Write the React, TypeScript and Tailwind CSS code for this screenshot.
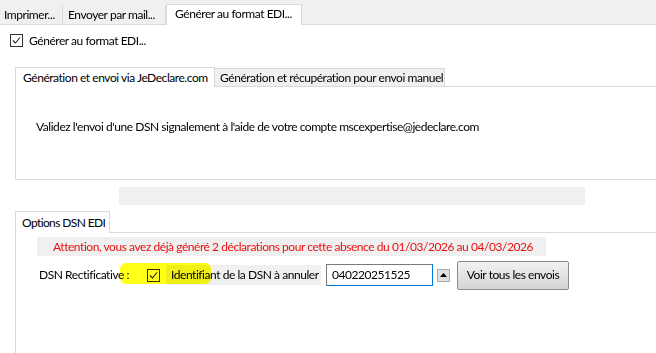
import React from 'react';

const CheckBox: React.FC<{ className?: string }> = ({ className = '' }) => (
  <span className={`inline-flex shrink-0 items-center justify-center w-[13px] h-[13px] border border-[#333333] ${className}`}>
    <svg width="11" height="11" viewBox="0 0 11 11">
      <path d="M2 5.5 L4.5 8 L9 2.5" fill="none" stroke="#222222" strokeWidth="1.1" />
    </svg>
  </span>
);

const App: React.FC = () => {
  return (
    <div className="relative w-[656px] h-[353px] overflow-hidden bg-white text-[12px] text-[#000000] font-['Lato',sans-serif] tracking-[-0.45px] leading-none whitespace-nowrap">
      {/* main tab strip */}
      <div className="flex items-end h-[25px] bg-[#f0f0f0] border-b border-[#d9d9d9]">
        <div className="flex items-center w-[63px] h-[19px] pl-[4px] border-r border-[#d9d9d9] bg-[#f0f0f0]">Imprimer...</div>
        <div className="flex items-center w-[103px] h-[19px] pl-[5px] border-r border-[#d9d9d9] bg-[#f0f0f0]">Envoyer par mail...</div>
        <div className="flex items-center w-[136px] h-[21px] pl-[8px] -mb-px bg-white border border-b-0 border-[#d9d9d9] pb-[2px]">Générer au format EDI...</div>
      </div>

      <div className="flex items-center gap-[6px] mt-[9px] ml-[10px]">
        <CheckBox />
        <span>Générer au format EDI...</span>
      </div>

      {/* JeDeclare tabs */}
      <div className="ml-[15px] mt-[19px]">
        <div className="flex items-end h-[20px]">
          <div className="flex items-center w-[200px] h-[20px] pl-[7px] bg-white border border-b-0 border-[#d9d9d9] -mb-px relative z-10">Génération et envoi via JeDeclare.com</div>
          <div className="flex items-center w-[230px] h-[18px] pl-[5px] bg-[#f0f0f0] border border-l-0 border-b-0 border-[#d9d9d9]">Génération et récupération pour envoi manuel</div>
        </div>
        <div className="w-[660px] h-[94px] border border-[#d9d9d9] flex items-center pl-[20px] pb-[13px]">
          Validez l'envoi d'une DSN signalement à l'aide de votre compte mscexpertise@jedeclare.com
        </div>
      </div>

      <div className="ml-[119px] mt-[7px] w-[466px] h-[18px] bg-[#f0f0f0]" />

      {/* Options DSN EDI */}
      <div className="ml-[15px] mt-[5px]">
        <div className="flex items-end h-[22px]">
          <div className="flex items-center w-[95px] h-[22px] pl-[6px] bg-white border border-b-0 border-[#d9d9d9] -mb-px relative z-10 tracking-[-0.6px]">Options DSN EDI</div>
        </div>
        <div className="w-[660px] h-[130px] border border-[#d9d9d9] pl-[21px] pt-[4px]">
          <div className="flex items-center w-[509px] h-[19px] bg-[#f0f0f0] pl-[16px] text-[#e81010]">
            Attention, vous avez déjà généré 2 déclarations pour cette absence du 01/03/2026 au 04/03/2026
          </div>
          <div className="flex items-center mt-[5px] h-[29px] pb-[1px]">
            <span className="ml-[2px] w-[108px]">DSN Rectificative :</span>
            <CheckBox />
            <span className="flex items-center ml-[6px] h-[20px] w-[155px] bg-[#f0f0f0] pl-[5px]">Identifiant de la DSN à annuler</span>
            <span className="flex items-center ml-[5px] w-[107px] h-[22px] border border-[#7a7a7a] border-r-[#0078d7] border-b-[#0078d7] bg-white pl-[5px]">040220251525</span>
            <span className="flex items-center justify-center ml-[4px] w-[13px] h-[13px] border border-[#adadad] bg-[#e1e1e1]">
              <svg width="7" height="4" viewBox="0 0 7 4"><path d="M0 4 L3.5 0 L7 4 Z" fill="#000000" /></svg>
            </span>
            <span className="flex items-center justify-center ml-[7px] w-[112px] h-[29px] border border-[#8c8c8c] rounded-[2px] bg-gradient-to-b from-[#f2f2f2] to-[#d4d4d4]">Voir tous les envois</span>
          </div>
        </div>
      </div>

      {/* yellow marker annotation */}
      <div className="absolute left-[120px] top-[263px] w-[91px] h-[21px] rounded-[6px] bg-[#ffff00] opacity-90 mix-blend-multiply pointer-events-none" />
    </div>
  );
};

export default App;
